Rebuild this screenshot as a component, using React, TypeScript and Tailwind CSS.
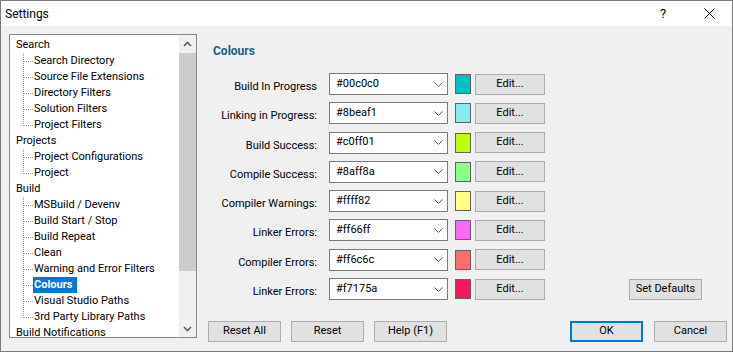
import React from 'react';

type Group = {
    label: string;
    children: string[];
};

const treeGroups: Group[] = [
    {
        label: 'Search',
        children: [
            'Search Directory',
            'Source File Extensions',
            'Directory Filters',
            'Solution Filters',
            'Project Filters',
        ],
    },
    { label: 'Projects', children: ['Project Configurations', 'Project'] },
    {
        label: 'Build',
        children: [
            'MSBuild / Devenv',
            'Build Start / Stop',
            'Build Repeat',
            'Clean',
            'Warning and Error Filters',
            'Colours',
            'Visual Studio Paths',
            '3rd Party Library Paths',
        ],
    },
    { label: 'Build Notifications', children: [] },
];

const colourRows = [
    { label: 'Build In Progress', value: '#00c0c0' },
    { label: 'Linking in Progress:', value: '#8beaf1' },
    { label: 'Build Success:', value: '#c0ff01' },
    { label: 'Compile Success:', value: '#8aff8a' },
    { label: 'Compiler Warnings:', value: '#ffff82' },
    { label: 'Linker Errors:', value: '#ff66ff' },
    { label: 'Compiler Errors:', value: '#ff6c6c' },
    { label: 'Linker Errors:', value: '#f7175a' },
];

// dotted tree connector for a child row
const Connector = ({ last }: { last: boolean }) => (
    <svg width="10" height="16" className="shrink-0" shapeRendering="crispEdges">
        <line
            x1="0.5"
            y1="0"
            x2="0.5"
            y2={last ? 9 : 16}
            stroke="#a0a0a0"
            strokeDasharray="1 1"
        />
        <line x1="1" y1="8.5" x2="10" y2="8.5" stroke="#a0a0a0" strokeDasharray="1 1" />
    </svg>
);

const ScrollArrow = ({ up }: { up: boolean }) => (
    <div className="h-[17px] flex items-center justify-center">
        <svg width="9" height="6">
            <path
                d={up ? 'M1 5 L4.5 1.5 L8 5' : 'M1 1 L4.5 4.5 L8 1'}
                fill="none"
                stroke="#606060"
                strokeWidth="1.6"
            />
        </svg>
    </div>
);

const Tree = () => (
    <div className="w-[188px] h-[304px] border border-[#828790] bg-white flex shrink-0">
        <div className="flex-1 overflow-hidden pt-[2px] leading-[16px]">
            {treeGroups.map((group) => (
                <div key={group.label}>
                    <div className="h-[16px] pl-[5px]">
                        <span className="px-[1px] whitespace-nowrap">{group.label}</span>
                    </div>
                    {group.children.map((child, i) => {
                        const selected = child === 'Colours';
                        return (
                            <div key={child} className="h-[16px] pl-[13px] flex">
                                <Connector last={i === group.children.length - 1} />
                                <span
                                    className={
                                        selected
                                            ? 'pl-[1px] pr-[5px] bg-[#0078d7] text-white font-bold whitespace-nowrap'
                                            : 'pl-[1px] whitespace-nowrap'
                                    }
                                >
                                    {child}
                                </span>
                            </div>
                        );
                    })}
                </div>
            ))}
        </div>
        <div className="w-[17px] bg-[#f0f0f0] flex flex-col">
            <ScrollArrow up />
            <div className="mt-[1px] h-[218px] bg-[#cdcdcd]" />
            <div className="flex-1" />
            <ScrollArrow up={false} />
        </div>
    </div>
);

const Button = ({ label, primary, className }: { label: string; primary?: boolean; className?: string }) => (
    <div
        className={`flex items-center justify-center bg-[#e1e1e1] ${
            primary ? 'border-2 border-[#0078d7]' : 'border border-[#adadad]'
        } ${className ?? ''}`}
    >
        {label}
    </div>
);

const ColourRow = ({ label, value, last }: { label: string; value: string; last: boolean }) => (
    <div className="flex items-center h-[22px]">
        <div className="w-[120px] text-right pt-[6px] leading-[14px] whitespace-nowrap">{label}</div>
        <div className="ml-[12px] w-[119px] h-[22px] bg-white border border-[#7a7a7a] flex items-center pl-[6px] pr-[4px]">
            <span className="flex-1">{value}</span>
            <svg width="9" height="5">
                <path d="M0.5 0.5 L4.5 4.5 L8.5 0.5" fill="none" stroke="#606060" strokeWidth="1" />
            </svg>
        </div>
        <div
            className="ml-[7px] w-[16px] h-[20px] border border-[#646464]"
            style={{ backgroundColor: value }}
        />
        <Button label="Edit..." className="ml-[4px] w-[70px] h-[21px]" />
        {last && <Button label="Set Defaults" className="ml-auto mr-[30px] w-[73px] h-[21px]" />}
    </div>
);

const App = () => {
    return (
        <div className="w-[733px] h-[352px] border border-[#7a7a7a] bg-[#f0f0f0] flex flex-col overflow-hidden text-[11px] text-black font-['Roboto',sans-serif]">
            <div className="h-[25px] bg-white flex items-center shrink-0">
                <span className="pl-[4px] text-[12px]">Settings</span>
                <div className="ml-auto flex h-full">
                    <div className="w-[46px] flex items-center justify-center text-[13px]">?</div>
                    <div className="w-[46px] flex items-center justify-center">
                        <svg width="11" height="11">
                            <path d="M0.5 0.5 L10.5 10.5 M10.5 0.5 L0.5 10.5" stroke="#111" strokeWidth="1" />
                        </svg>
                    </div>
                </div>
            </div>

            <div className="flex-1 flex pl-[8px] pt-[8px]">
                <Tree />

                <div className="flex-1 flex flex-col">
                    <p className="pl-[16px] pt-[10px] leading-[14px] text-[12px] font-bold text-[#1a5d8c]">
                        Colours
                    </p>
                    <div className="mt-[15px] flex flex-col gap-[7.3px]">
                        {colourRows.map((row, i) => (
                            <ColourRow
                                key={i}
                                label={row.label}
                                value={row.value}
                                last={i === colourRows.length - 1}
                            />
                        ))}
                    </div>
                    <div className="mt-[21px] flex pl-[11px]">
                        <div className="flex gap-[10px]">
                            <Button label="Reset All" className="w-[73px] h-[21px]" />
                            <Button label="Reset" className="w-[73px] h-[21px]" />
                            <Button label="Help (F1)" className="w-[73px] h-[21px]" />
                        </div>
                        <div className="ml-auto mr-[5px] flex gap-[11px]">
                            <Button label="OK" primary className="w-[73px] h-[21px]" />
                            <Button label="Cancel" className="w-[73px] h-[21px]" />
                        </div>
                    </div>
                </div>
            </div>
        </div>
    );
};

export default App;
